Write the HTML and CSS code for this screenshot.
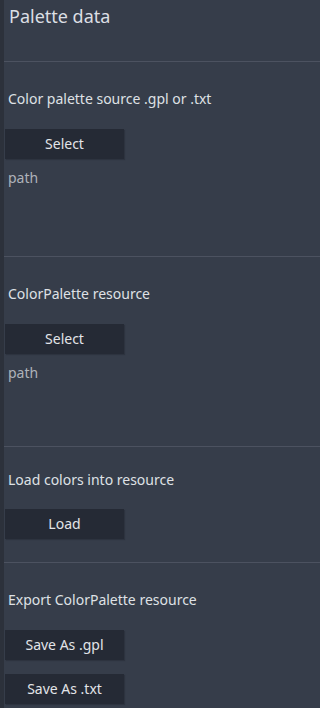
FILE: index.html
```html
<!DOCTYPE html>
<html>
<head>
<meta charset="utf-8">
<link rel="stylesheet" href="styles.css">
</head>
<body>
<div class="panel">
  <div class="title">Palette data</div>
  <div class="sep sep-1"></div>

  <div class="label label-a">Color palette source .gpl or .txt</div>
  <div class="btn">Select</div>
  <div class="path path-a">path</div>
  <div class="sep sep-2"></div>

  <div class="label label-b">ColorPalette resource</div>
  <div class="btn">Select</div>
  <div class="path path-b">path</div>
  <div class="sep sep-3"></div>

  <div class="label label-c">Load colors into resource</div>
  <div class="btn btn-tight">Load</div>
  <div class="sep sep-4"></div>

  <div class="label label-a">Export ColorPalette resource</div>
  <div class="btn">Save As .gpl</div>
  <div class="btn btn-next">Save As .txt</div>
</div>
</body>
</html>
```

FILE: styles.css
```css
html, body {
  margin: 0;
  padding: 0;
  background: #363d4a;
}

body {
  font-family: "Noto Sans", "Open Sans", sans-serif;
  color: #dfe1e5;
  height: 708px;
  overflow: hidden;
}

.panel {
  border-left: 4px solid #2c313b;
  min-height: 708px;
  box-sizing: border-box;
  display: flex;
  flex-direction: column;
}

.title {
  font-size: 18px;
  line-height: 24px;
  padding: 4px 0 0 5px;
  color: #dcdfe4;
}

.sep {
  height: 1px;
  background: #4c5260;
}

.sep-1 { margin-top: 33px; }
.sep-2 { margin-top: 68px; }
.sep-3 { margin-top: 63px; }
.sep-4 { margin-top: 23px; }

.label {
  font-size: 14px;
  line-height: 20px;
  padding-left: 4px;
  color: #dfe1e5;
}

.label-a { margin-top: 27px; }
.label-b { margin-top: 27px; }
.label-c { margin-top: 23px; }

.btn {
  margin: 20px 0 0 1px;
  width: 119px;
  height: 30px;
  background: #252a35;
  color: #e2e4e8;
  font-size: 14px;
  line-height: 30px;
  text-align: center;
  box-shadow: 1px 1px 1px rgba(0, 0, 0, 0.15);
}

.btn-tight { margin-top: 19px; }
.btn-next { margin-top: 14px; }

.path {
  font-size: 14px;
  line-height: 20px;
  padding-left: 4px;
  color: #aeb2b9;
}

.path-a { margin-top: 9px; }
.path-b { margin-top: 9px; }
```
